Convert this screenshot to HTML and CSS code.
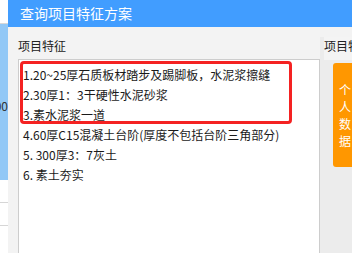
FILE: index.html
```html
<!DOCTYPE html>
<html lang="zh-CN">

<head>
  <meta charset="UTF-8">
  <meta name="viewport" content="width=device-width, initial-scale=1.0">
  <title>查询项目特征方案</title>
  <link rel="stylesheet" href="styles.css">
</head>

<body>

  <div class="screen">
    <div class="page-edge">
      <div class="edge-top"></div>
      <div class="edge-blue"><span>00</span></div>
      <div class="edge-row"></div>
      <div class="edge-row"></div>
    </div>

    <div class="dialog">
      <div class="dialog-title">查询项目特征方案</div>
      <div class="dialog-body">
        <div class="col-main">
          <div class="col-label">项目特征</div>
          <div class="feature-box">
            <div class="feature-text">
              <div>1.20~25厚石质板材踏步及踢脚板，水泥浆擦缝</div>
              <div>2.30厚1：3干硬性水泥砂浆</div>
              <div>3.素水泥浆一道</div>
              <div>4.60厚C15混凝土台阶(厚度不包括台阶三角部分)</div>
              <div>5. 300厚3：7灰土</div>
              <div>6. 素土夯实</div>
            </div>
            <!-- red annotation around the first three lines -->
            <div class="highlight"></div>
          </div>
        </div>
        <div class="col-side">
          <div class="side-label">项目特征方案</div>
          <button class="pick-btn">
            <span>个</span>
            <span>人</span>
            <span>数</span>
            <span>据</span>
          </button>
        </div>
      </div>
    </div>
  </div>

</body>

</html>
```

FILE: styles.css
```css
body {
  margin: 0;
  font-family: "Noto Sans CJK SC", "Liberation Sans", sans-serif;
  background-color: #fff;
}

.screen {
  display: flex;
  width: 352px;
  height: 253px;
  overflow: hidden;
}

.page-edge {
  width: 8px;
  flex-shrink: 0;
  overflow: hidden;
}

.edge-top {
  height: 23px;
  border-bottom: 1px solid #d8d8d8;
  background-color: #fff;
}

.edge-blue {
  height: 156px;
  background-color: #92c8f6;
  display: flex;
  justify-content: flex-end;
  padding-top: 74px;
  box-sizing: border-box;
  font-size: 12px;
  line-height: 16px;
  color: #333;
}

.edge-row {
  height: 22px;
  border-bottom: 1px solid #d6d6d6;
  background-color: #fff;
}

.dialog {
  flex: 1;
  display: flex;
  flex-direction: column;
  background-color: #f3f3f3;
}

.dialog-title {
  height: 27px;
  line-height: 27px;
  padding-left: 12px;
  background-color: #419dff;
  color: #fff;
  font-size: 14px;
  flex-shrink: 0;
}

.dialog-body {
  flex: 1;
  display: flex;
}

.col-main {
  width: 302px;
  margin-left: 10px;
  display: flex;
  flex-direction: column;
  flex-shrink: 0;
}

.col-label {
  height: 32px;
  padding-top: 10px;
  box-sizing: border-box;
  font-size: 12px;
  line-height: 18px;
  color: #222;
}

.feature-box {
  position: relative;
  flex: 1;
  background-color: #fff;
  border: 1px solid #cdcdcd;
  border-bottom: 0;
}

.feature-text {
  padding: 5px 4px;
  font-size: 12px;
  line-height: 20px;
  color: #1a1a1a;
  white-space: nowrap;
}

.highlight {
  position: absolute;
  left: 1px;
  top: 1px;
  width: 266px;
  height: 57px;
  border: 3px solid #f42222;
  border-radius: 4px;
}

.col-side {
  flex: 1;
  margin-top: 10px;
  background-color: #ececec;
  display: flex;
  flex-direction: column;
  overflow: hidden;
}

.side-label {
  margin-left: 4px;
  height: 23px;
  line-height: 18px;
  background-color: #f4f4f4;
  font-size: 12px;
  color: #222;
  white-space: nowrap;
}

.pick-btn {
  margin: 3px 0 0 13px;
  width: 24px;
  height: 104px;
  padding: 0;
  border: 0;
  border-radius: 3px;
  background-color: #ff9700;
  color: #fff;
  font-family: inherit;
  font-size: 12px;
  line-height: 17px;
  display: flex;
  flex-direction: column;
  align-items: center;
  justify-content: center;
}
```
